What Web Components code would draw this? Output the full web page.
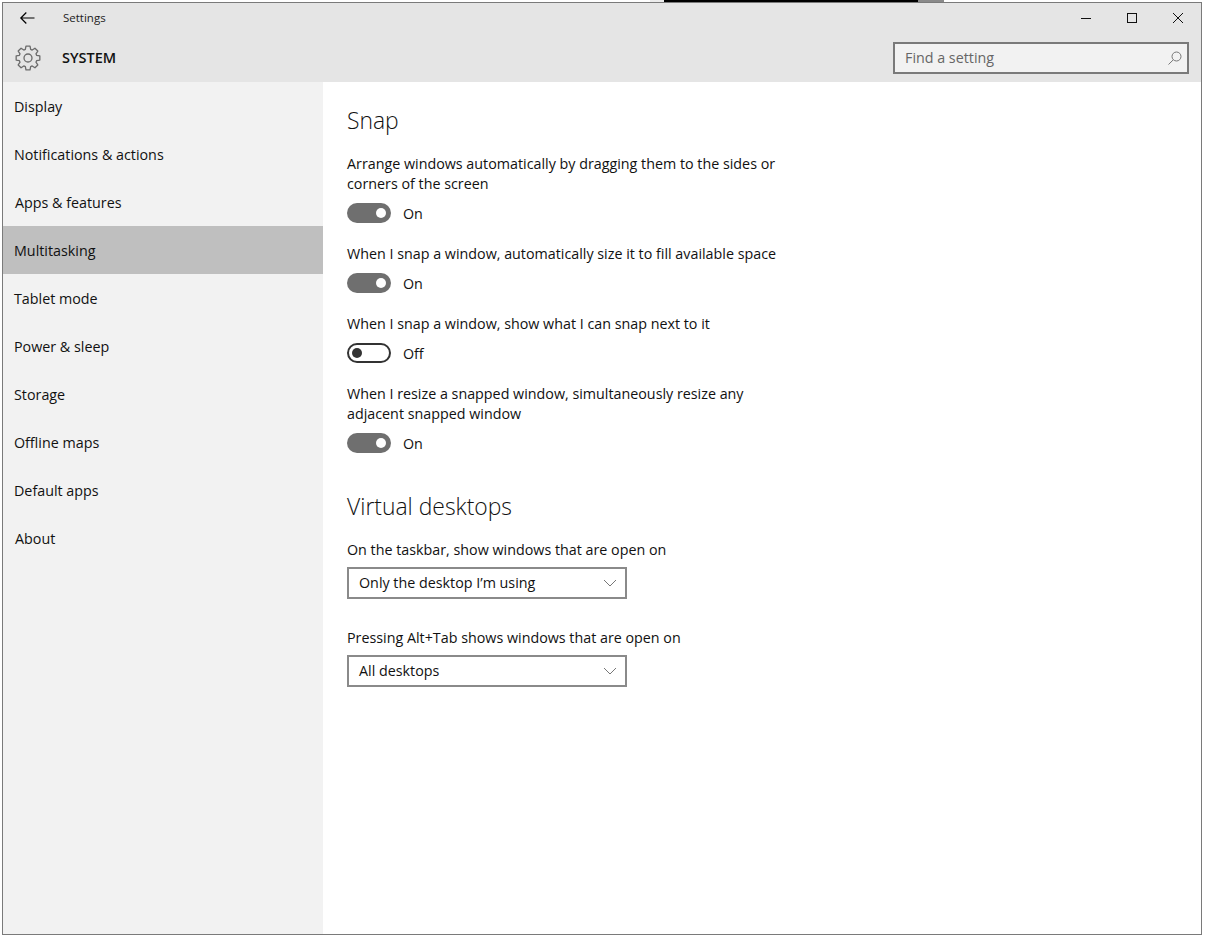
<!DOCTYPE html>
<html>
<head>
<meta charset="utf-8">
<title>Settings</title>
<style>
  html, body { margin: 0; height: 100%; background: #fff; }
  body { font-family: "Open Sans", "Noto Sans", sans-serif; color: #111; overflow: hidden; }
</style>
</head>
<body>
<settings-window>
  <nav-item slot="nav">Display</nav-item>
  <nav-item slot="nav">Notifications &amp; actions</nav-item>
  <nav-item slot="nav" style="--x:1px">Apps &amp; features</nav-item>
  <nav-item slot="nav" active>Multitasking</nav-item>
  <nav-item slot="nav">Tablet mode</nav-item>
  <nav-item slot="nav">Power &amp; sleep</nav-item>
  <nav-item slot="nav">Storage</nav-item>
  <nav-item slot="nav">Offline maps</nav-item>
  <nav-item slot="nav">Default apps</nav-item>
  <nav-item slot="nav" style="--x:1px">About</nav-item>

  <section-title>Snap</section-title>
  <toggle-row on>Arrange windows automatically by dragging them to the sides or<br>corners of the screen</toggle-row>
  <toggle-row on>When I snap a window, automatically size it to fill available space</toggle-row>
  <toggle-row>When I snap a window, show what I can snap next to it</toggle-row>
  <toggle-row on>When I resize a snapped window, simultaneously resize any<br>adjacent snapped window</toggle-row>

  <section-title second>Virtual desktops</section-title>
  <drop-down value="Only the desktop I’m using">On the taskbar, show windows that are open on</drop-down>
  <drop-down value="All desktops">Pressing Alt+Tab shows windows that are open on</drop-down>
</settings-window>

<script>
// 8 tooth gear outline, same shape as the Settings icon
function gearPath() {
  const c = 13, out = 12, inn = 9, pts = [];
  for (let i = 0; i < 8; i++) {
    const a = i * Math.PI / 4;
    [[inn, -0.3], [out, -0.17], [out, 0.17], [inn, 0.3]].forEach(([r, d]) => {
      pts.push((c + r * Math.sin(a + d)).toFixed(2) + ' ' + (c - r * Math.cos(a + d)).toFixed(2));
    });
  }
  return 'M' + pts.join('L') + 'Z';
}

class SettingsWindow extends HTMLElement {
  connectedCallback() {
    this.attachShadow({ mode: 'open' });
    this.shadowRoot.innerHTML = `
      <style>
        :host { display: block; width: 1205px; height: 938px; box-sizing: border-box; padding-right: 3px; }
        .strip { display: flex; height: 2px; }
        .strip .a { width: 650px; }
        .strip .l { width: 14px; background: #ececec; }
        .strip .b { width: 254px; background: #000; }
        .strip .c { width: 26px; background: #8a8a8a; }
        .win { box-sizing: border-box; margin-left: 2px; height: 933px; border: 1px solid #7a7a7a; display: flex; flex-direction: column; background: #fff; }
        .head { background: #e5e5e5; height: 79px; flex: none; display: flex; flex-direction: column; }
        .title { display: flex; align-items: center; height: 30px; font-size: 11.5px; color: #222; }
        .back { width: 60px; flex: none; display: flex; padding-left: 14px; box-sizing: border-box; }
        .title .name { flex: 1; padding-bottom: 2px; }
        .caps { display: flex; }
        .caps span { width: 46px; height: 30px; display: flex; align-items: center; justify-content: center; }
        .sub { display: flex; align-items: center; height: 49px; padding-top: 1px; box-sizing: border-box; }
        .gear { width: 59px; flex: none; padding-left: 12px; box-sizing: border-box; display: flex; }
        .sys { flex: 1; font-size: 14.5px; font-weight: 600; color: #111; padding-bottom: 2px; }
        .search { width: 296px; height: 32px; box-sizing: border-box; margin-right: 12px; border: 2px solid #7a7a7a; background: #f2f2f2; display: flex; align-items: center; justify-content: space-between; padding: 0 4px 2px 10px; font-size: 14.3px; color: #666; }
        .search svg { margin-top: 2px; }
        .body { flex: 1; display: flex; min-height: 0; }
        .side { width: 320px; flex: none; background: #f2f2f2; }
        .main { flex: 1; padding: 21px 24px; }
      </style>
      <div class="strip"><span class="a"></span><span class="l"></span><span class="b"></span><span class="c"></span></div>
      <div class="win">
        <div class="head">
          <div class="title">
            <div class="back"><svg width="20" height="20" viewBox="0 0 20 20" fill="none" stroke="#000" stroke-width="1.2"><path d="M3.800 10H17.500M9.300 4.500 3.800 10 9.300 15.500"/></svg></div>
            <div class="name">Settings</div>
            <div class="caps">
              <span><svg width="12" height="12" fill="none" stroke="#111"><path d="M1 6.500h10"/></svg></span>
              <span><svg width="12" height="12" fill="none" stroke="#111"><rect x="1.500" y="1.500" width="9" height="9"/></svg></span>
              <span><svg width="12" height="12" fill="none" stroke="#111"><path d="M1 1l10 10M11 1 1 11"/></svg></span>
            </div>
          </div>
          <div class="sub">
            <div class="gear"><svg width="26" height="26" viewBox="0 0 26 26" fill="none" stroke="#6b6b6b" stroke-width="1.3" stroke-linejoin="round"><circle cx="13" cy="13" r="4"/><path d="${gearPath()}"/></svg></div>
            <div class="sys">SYSTEM</div>
            <div class="search"><span>Find a setting</span><svg width="16" height="16" viewBox="0 0 16 16" fill="none" stroke="#777"><circle cx="9.500" cy="6.500" r="4.500"/><path d="M6.300 9.800 1.500 14.500"/></svg></div>
          </div>
        </div>
        <div class="body">
          <div class="side"><slot name="nav"></slot></div>
          <div class="main"><slot></slot></div>
        </div>
      </div>`;
  }
}

class NavItem extends HTMLElement {
  connectedCallback() {
    this.attachShadow({ mode: 'open' });
    this.shadowRoot.innerHTML = `
      <style>
        :host { display: flex; align-items: center; height: 48px; padding-left: calc(11px + var(--x, 0px)); font-size: 14.3px; color: #111; }
        :host([active]) { background: #bfbfbf; }
      </style>
      <slot></slot>`;
  }
}

class SectionTitle extends HTMLElement {
  connectedCallback() {
    this.attachShadow({ mode: 'open' });
    this.shadowRoot.innerHTML = `
      <style>
        :host { display: block; font-size: 22.9px; font-weight: 300; line-height: 34px; padding-top: 1px; color: #111; margin-bottom: 16px; }
        :host([second]) { margin-top: 35px; }
      </style>
      <slot></slot>`;
  }
}

class ToggleRow extends HTMLElement {
  connectedCallback() {
    this.attachShadow({ mode: 'open' });
    const on = this.hasAttribute('on');
    this.shadowRoot.innerHTML = `
      <style>
        :host { display: block; font-size: 14.3px; line-height: 20px; color: #111; margin-bottom: 20px; }
        .row { display: flex; align-items: center; gap: 12px; margin-top: 10px; height: 20px; }
        .sw { width: 44px; height: 20px; box-sizing: border-box; border-radius: 10px; position: relative; flex: none; align-self: flex-start; margin-top: -1px; }
        .sw.on { background: #6f6f6f; }
        .sw.off { border: 2px solid #333; background: #fff; }
        .knob { position: absolute; width: 10px; height: 10px; border-radius: 50%; top: 5px; right: 5px; background: #fff; }
        .sw.off .knob { top: 3px; left: 3px; right: auto; background: #333; }
      </style>
      <div><slot></slot></div>
      <div class="row"><div class="sw ${on ? 'on' : 'off'}"><span class="knob"></span></div><span>${on ? 'On' : 'Off'}</span></div>`;
  }
}

class DropDown extends HTMLElement {
  connectedCallback() {
    this.attachShadow({ mode: 'open' });
    this.shadowRoot.innerHTML = `
      <style>
        :host { display: block; font-size: 14.3px; line-height: 20px; color: #111; margin-bottom: 29px; }
        .box { width: 280px; height: 32px; box-sizing: border-box; margin-top: 7px; border: 2px solid #8a8a8a; display: flex; align-items: center; justify-content: space-between; padding: 0 8px 0 10px; }
      </style>
      <div><slot></slot></div>
      <div class="box"><span>${this.getAttribute('value')}</span><svg width="14" height="8" viewBox="0 0 14 8" fill="none" stroke="#777"><path d="M1 1l6 6 6-6"/></svg></div>`;
  }
}

customElements.define('settings-window', SettingsWindow);
customElements.define('nav-item', NavItem);
customElements.define('section-title', SectionTitle);
customElements.define('toggle-row', ToggleRow);
customElements.define('drop-down', DropDown);
</script>
</body>
</html>
